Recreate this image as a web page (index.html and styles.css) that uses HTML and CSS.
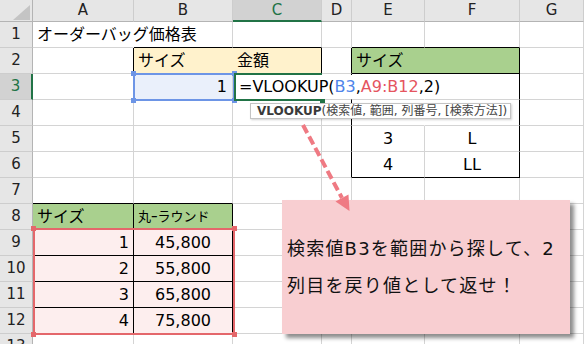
FILE: index.html
```html
<!DOCTYPE html>
<html lang="ja">
<head>
<meta charset="utf-8">
<title>オーダーバッグ価格表</title>
<link rel="stylesheet" href="styles.css">
</head>
<body>
<div class="sheet">
  <div class="corner"><svg class="tri" width="33" height="22" viewBox="0 0 33 22"><polygon points="13,20 30,20 30,5" fill="#c4c4c4"/></svg></div>
  <div class="ch">A</div><div class="ch">B</div><div class="ch sel">C</div><div class="ch">D</div><div class="ch">E</div><div class="ch">F</div><div class="ch">G</div>

  <div class="rh">1</div>
  <div class="c nor">オーダーバッグ価格表</div><div class="c kb"></div><div class="c kb"></div><div class="c"></div><div class="c kb"></div><div class="c kb"></div><div class="c"></div>

  <div class="rh">2</div>
  <div class="c kr"></div><div class="c yel kb">サイズ</div><div class="c yel kr kb">金額</div><div class="c kr"></div><div class="c grn span2 kr kb">サイズ</div><div class="c"></div>

  <div class="rh sel">3</div>
  <div class="c"></div><div class="c bsel num">1</div><div class="c"></div><div class="c kr"></div><div class="c nor"></div><div class="c kr"></div><div class="c"></div>

  <div class="rh">4</div>
  <div class="c"></div><div class="c"></div><div class="c"></div><div class="c kr"></div><div class="c nor"></div><div class="c kr"></div><div class="c"></div>

  <div class="rh">5</div>
  <div class="c"></div><div class="c"></div><div class="c"></div><div class="c kr"></div><div class="c ctr">3</div><div class="c ctr kr">L</div><div class="c"></div>

  <div class="rh">6</div>
  <div class="c"></div><div class="c"></div><div class="c"></div><div class="c kr"></div><div class="c ctr kb">4</div><div class="c ctr kr kb">LL</div><div class="c"></div>

  <div class="rh">7</div>
  <div class="c kb"></div><div class="c kb"></div><div class="c"></div><div class="c"></div><div class="c"></div><div class="c"></div><div class="c"></div>

  <div class="rh">8</div>
  <div class="c grn kr kb">サイズ</div><div class="c grn kr kb small">丸ｰラウンド</div><div class="c"></div><div class="c"></div><div class="c"></div><div class="c"></div><div class="c"></div>

  <div class="rh">9</div>
  <div class="c pnk kr kb num">1</div><div class="c pnk kr kb ctr">45,800</div><div class="c"></div><div class="c"></div><div class="c"></div><div class="c"></div><div class="c"></div>

  <div class="rh">10</div>
  <div class="c pnk kr kb num">2</div><div class="c pnk kr kb ctr">55,800</div><div class="c"></div><div class="c"></div><div class="c"></div><div class="c"></div><div class="c"></div>

  <div class="rh">11</div>
  <div class="c pnk kr kb num">3</div><div class="c pnk kr kb ctr">65,800</div><div class="c"></div><div class="c"></div><div class="c"></div><div class="c"></div><div class="c"></div>

  <div class="rh">12</div>
  <div class="c pnk kr kb num">4</div><div class="c pnk kr kb ctr">75,800</div><div class="c"></div><div class="c"></div><div class="c"></div><div class="c"></div><div class="c"></div>

  <div class="rh">13</div>
  <div class="c"></div><div class="c"></div><div class="c"></div><div class="c"></div><div class="c"></div><div class="c"></div><div class="c"></div>

  <!-- overlays -->
  <div class="selblue"><i class="h tl"></i><i class="h tr"></i><i class="h bl"></i><i class="h br"></i></div>
  <div class="active"><i class="fill"></i></div>
  <div class="editor">=VLOOKUP(<span class="rb">B3</span>,<span class="rr">A9:B12</span>,2)</div>
  <div class="tip"><b>VLOOKUP</b>(検索値, 範囲, 列番号, [検索方法])</div>
  <div class="selred"><i class="h tl"></i><i class="h tr"></i><i class="h bl"></i><i class="h br"></i></div>
  <div class="callout"><p>検索値B3を範囲から探して、2</p><p>列目を戻り値として返せ！</p></div>
  <svg class="arrow" width="584" height="344" viewBox="0 0 584 344">
    <line x1="303" y1="125" x2="342" y2="198" stroke="#ef7a83" stroke-width="4" stroke-dasharray="9 4"/>
    <polygon points="335.5,201.5 348.5,194.5 349.5,211" fill="#ef7a83"/>
  </svg>
</div>
</body>
</html>
```
FILE: styles.css
```css
html, body {
  margin: 0;
  padding: 0;
  background: #fff;
}
body {
  width: 584px;
  height: 344px;
  overflow: hidden;
  font-family: "DejaVu Sans", "Noto Sans CJK JP", sans-serif;
}
.sheet {
  position: relative;
  display: grid;
  grid-template-columns: 33px 101px 99px 89px 30px 73px 95px 64px;
  grid-template-rows: 22px repeat(13, 26px);
}
.c {
  box-sizing: border-box;
  border-right: 1px solid #d4d4d4;
  border-bottom: 1px solid #d4d4d4;
  font-size: 16px;
  line-height: 1;
  display: flex;
  align-items: center;
  padding: 0 4px;
  white-space: nowrap;
  color: #000;
  min-width: 0;
}
.ch, .rh, .corner {
  box-sizing: border-box;
  background: #e6e6e6;
  font-size: 15px;
  line-height: 1;
  color: #222;
  display: flex;
  align-items: center;
  justify-content: center;
}
.ch {
  border-right: 1px solid #cdcdcd;
  border-bottom: 1px solid #b4b4b4;
}
.rh {
  border-right: 1px solid #b4b4b4;
  border-bottom: 1px solid #cdcdcd;
}
.corner {
  border-right: 1px solid #b4b4b4;
  border-bottom: 1px solid #b4b4b4;
  position: relative;
}
.tri {
  position: absolute;
  left: 0;
  top: 0;
}
.ch.sel {
  background: #d2d2d2;
  color: #217346;
  border-bottom: 2px solid #217346;
}
.rh.sel {
  background: #d2d2d2;
  color: #217346;
  border-right: 2px solid #217346;
}
.nor { border-right-color: transparent; }
.yel { background: #fff2cc; border-right-color: transparent; }
.grn { background: #a9d08e; border-right-color: transparent; }
.pnk { background: #fdeeee; }
.bsel { background: #eaf0fb; }
.kr { border-right-color: #000; }
.kb { border-bottom-color: #000; }
.span2 { grid-column: span 2; }
.num { justify-content: flex-end; padding-right: 4px; }
.bsel.num { padding-right: 5px; }
.ctr { justify-content: center; }
.small { font-size: 13px; padding-left: 4px; }

/* overlays */
.selblue, .selred {
  position: absolute;
  box-sizing: border-box;
  border: 2px solid #6d95e6;
}
.selblue {
  left: 133px;
  top: 73px;
  width: 102px;
  height: 28px;
}
.selred {
  left: 33px;
  top: 228px;
  width: 202px;
  height: 107px;
  border-color: #e4676b;
}
.h {
  position: absolute;
  width: 5px;
  height: 5px;
  background: #6d95e6;
}
.selred .h { background: #e4676b; }
.h.tl { left: -4px; top: -4px; }
.h.tr { right: -4px; top: -4px; }
.h.bl { left: -4px; bottom: -4px; }
.h.br { right: -4px; bottom: -4px; }
.active {
  position: absolute;
  box-sizing: border-box;
  left: 234px;
  top: 73px;
  width: 88px;
  height: 28px;
  border: 2px solid #217346;
  border-right: none;
}
.fill {
  position: absolute;
  right: -3px;
  bottom: -4px;
  width: 5px;
  height: 5px;
  background: #217346;
}
.editor {
  position: absolute;
  left: 236px;
  top: 75px;
  width: 283px;
  height: 24px;
  background: #fff;
  box-sizing: border-box;
  padding-left: 3px;
  font-size: 16px;
  line-height: 24px;
  white-space: nowrap;
  color: #000;
}
.rb { color: #4f84ea; }
.rr { color: #e5555f; }
.tip {
  position: absolute;
  left: 250px;
  top: 103px;
  width: 261px;
  height: 16px;
  box-sizing: border-box;
  background: #fff;
  border: 1px solid #c4c4c4;
  box-shadow: 1px 1px 2px rgba(0, 0, 0, 0.18);
  padding-left: 6px;
  font-size: 12px;
  line-height: 14px;
  color: #444;
  white-space: nowrap;
}
.tip b { color: #3a3a3a; }
.callout {
  position: absolute;
  left: 282px;
  top: 200px;
  width: 288px;
  height: 134px;
  box-sizing: border-box;
  background: #f8ced1;
  box-shadow: 4px 4px 4px rgba(0, 0, 0, 0.45);
  padding-left: 5px;
  display: flex;
  flex-direction: column;
  justify-content: center;
  font-size: 18px;
  letter-spacing: 1.2px;
  color: #111;
}
.callout p {
  margin: 0;
  line-height: 37px;
  white-space: nowrap;
}
.arrow {
  position: absolute;
  left: 0;
  top: 0;
  pointer-events: none;
}
```
